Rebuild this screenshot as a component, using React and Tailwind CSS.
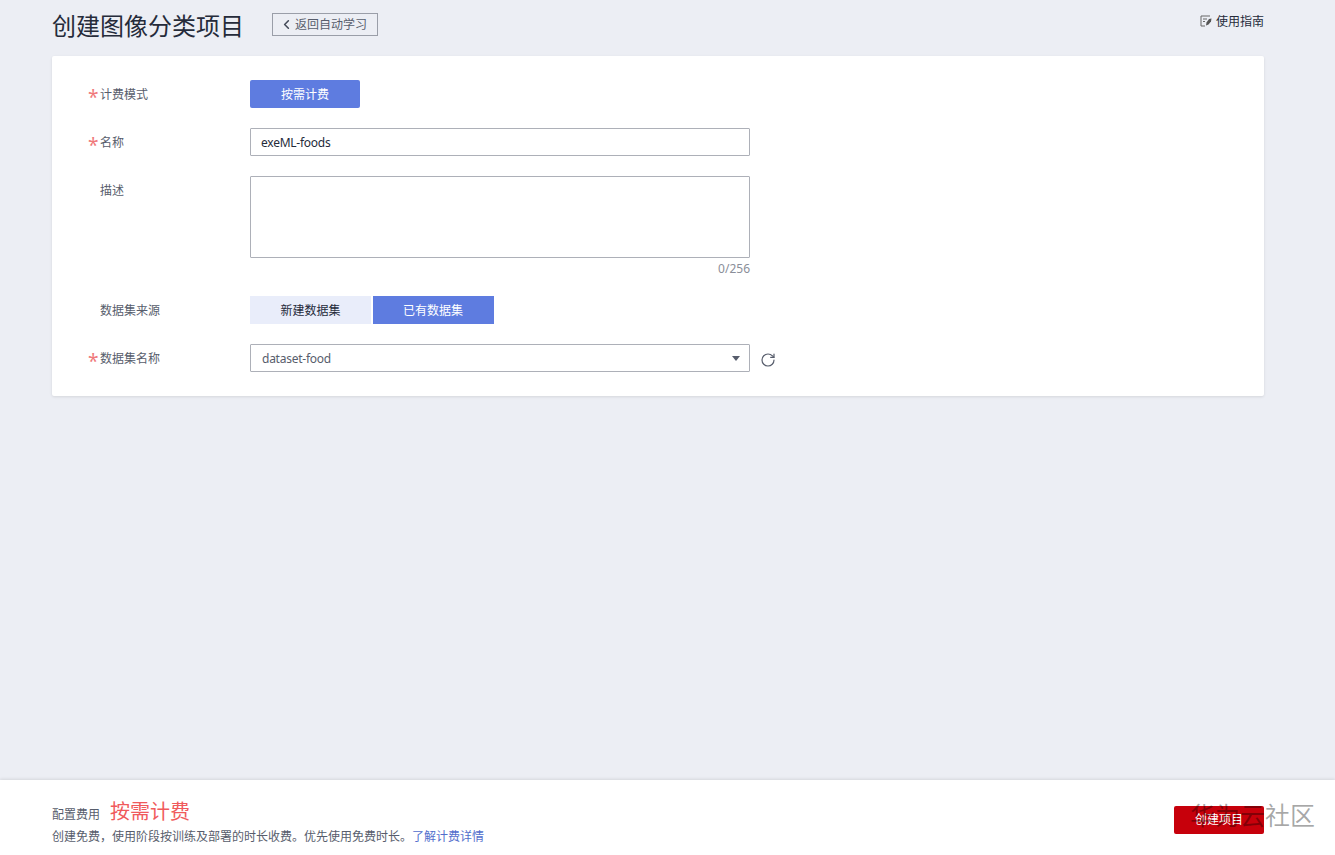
import React from 'react';
import { ChevronLeft, RotateCw } from 'lucide-react';

const font = { fontFamily: '"Noto Sans", "Noto Sans CJK SC", sans-serif' };

// One row of the form: star + label on the left, control on the right
function FormRow({ label, required, children, className = '' }) {
  return (
    <div className={`flex items-start ${className}`}>
      <div className="w-[198px] h-7 flex items-center shrink-0 pt-[2px]">
        <span className="w-[12px] ml-[36px] text-[#f0797b] text-[19px] leading-none pt-[4px]">{required ? '*' : ''}</span>
        <span className="text-xs text-[#575d6c]">{label}</span>
      </div>
      {children}
    </div>
  );
}

export default function App() {
  return (
    <div style={font} className="relative h-[855px] flex flex-col bg-[#eceef4] overflow-hidden">
      <div className="flex-1 px-[52px] mr-[19px]">
        {/* Title bar */}
        <div className="h-[56px] flex items-start">
          <h1 className="text-2xl leading-[51px] text-[#252b3a] font-normal">创建图像分类项目</h1>
          <button className="ml-[28px] mt-[13px] w-[106px] h-[23px] border border-[#9a9ea8] flex items-center pl-[6px] text-xs text-[#575d6c]">
            <ChevronLeft size={15} strokeWidth={2.5} className="text-[#444a58]" />
            <span className="ml-[1px]">返回自动学习</span>
          </button>
          <a className="ml-auto mt-[14px] flex items-center text-xs text-[#252b3a]">
            <svg width="12" height="12" viewBox="0 0 12 12" fill="none" className="mr-[4px] mb-[2px]">
              <path d="M10 1H1v10h4" stroke="#666" strokeWidth="1" />
              <path d="M3 4h4M3 6.5h2" stroke="#666" strokeWidth="1" />
              <path d="M11.5 3.5 9 4 6.5 7.5 6 10.5l2.5-1 2.5-3z" fill="#555" />
            </svg>
            使用指南
          </a>
        </div>

        {/* Form card */}
        <div className="h-[340px] bg-white pt-6 rounded-[2px] shadow-[0_1px_3px_rgba(0,0,0,0.1)]">
          <FormRow label="计费模式" required>
            <button className="w-[110px] h-7 pt-[1px] bg-[#5e7ce0] rounded-[2px] text-xs text-white">按需计费</button>
          </FormRow>
          <FormRow label="名称" required className="mt-5">
            <input
              readOnly
              value="exeML-foods"
              className="w-[500px] h-7 border border-[#adb0b8] rounded-[1px] px-[10px] text-xs tracking-[-0.25px] text-[#252b3a] outline-none"
            />
          </FormRow>
          <FormRow label="描述" className="mt-5">
            <div className="w-[500px]">
              <textarea readOnly className="block w-full h-[82px] border border-[#adb0b8] rounded-[1px] resize-none outline-none" />
              <div className="mt-[2px] h-[18px] leading-[18px] text-right text-xs text-[#8a8e99]">0/256</div>
            </div>
          </FormRow>
          <FormRow label="数据集来源" className="mt-[18px]">
            <div className="flex gap-[2px]">
              <button className="w-[121px] h-7 pt-[1px] bg-[#e9edfa] text-xs text-[#252b3a]">新建数据集</button>
              <button className="w-[121px] h-7 pt-[1px] pr-[1px] bg-[#5e7ce0] text-xs text-white">已有数据集</button>
            </div>
          </FormRow>
          <FormRow label="数据集名称" required className="mt-5">
            <div className="w-[500px] h-7 pt-[1px] border border-[#adb0b8] rounded-[1px] px-[11px] flex items-center justify-between text-xs tracking-[-0.25px] text-[#575d6c]">
              <span>dataset-food</span>
              <span className="mr-[-2px] mb-[1px] w-0 h-0 border-x-[4px] border-x-transparent border-t-[5px] border-t-[#575d6c]" />
            </div>
            <RotateCw size={16} strokeWidth={1.8} className="ml-[10px] mt-[8px] text-[#575d6c]" />
          </FormRow>
        </div>
      </div>

      {/* Bottom bar */}
      <div className="h-[75px] bg-white shadow-[0_-1px_3px_rgba(0,0,0,0.1)] pl-[52px] pr-[71px] flex items-center justify-between">
        <div className="pt-[12px]">
          <div className="flex items-end h-[26px]">
            <span className="text-xs text-[#575d6c] pb-[3px]">配置费用</span>
            <span className="ml-[10px] text-xl leading-[28px] text-[#f05a5c]">按需计费</span>
          </div>
          <p className="text-xs text-[#575d6c] leading-[22px]">
            创建免费，使用阶段按训练及部署的时长收费。优先使用免费时长。<a className="text-[#526ecc]">了解计费详情</a>
          </p>
        </div>
        <button className="mt-[4px] pt-[1px] w-[90px] h-7 bg-[#c7000b] rounded-[2px] text-xs text-white">创建项目</button>
      </div>

      {/* Site watermark over the footer */}
      <div className="absolute left-[1190px] top-[799px] text-[25px] leading-[32px] text-black/35 pointer-events-none">华为云社区</div>
    </div>
  );
}
